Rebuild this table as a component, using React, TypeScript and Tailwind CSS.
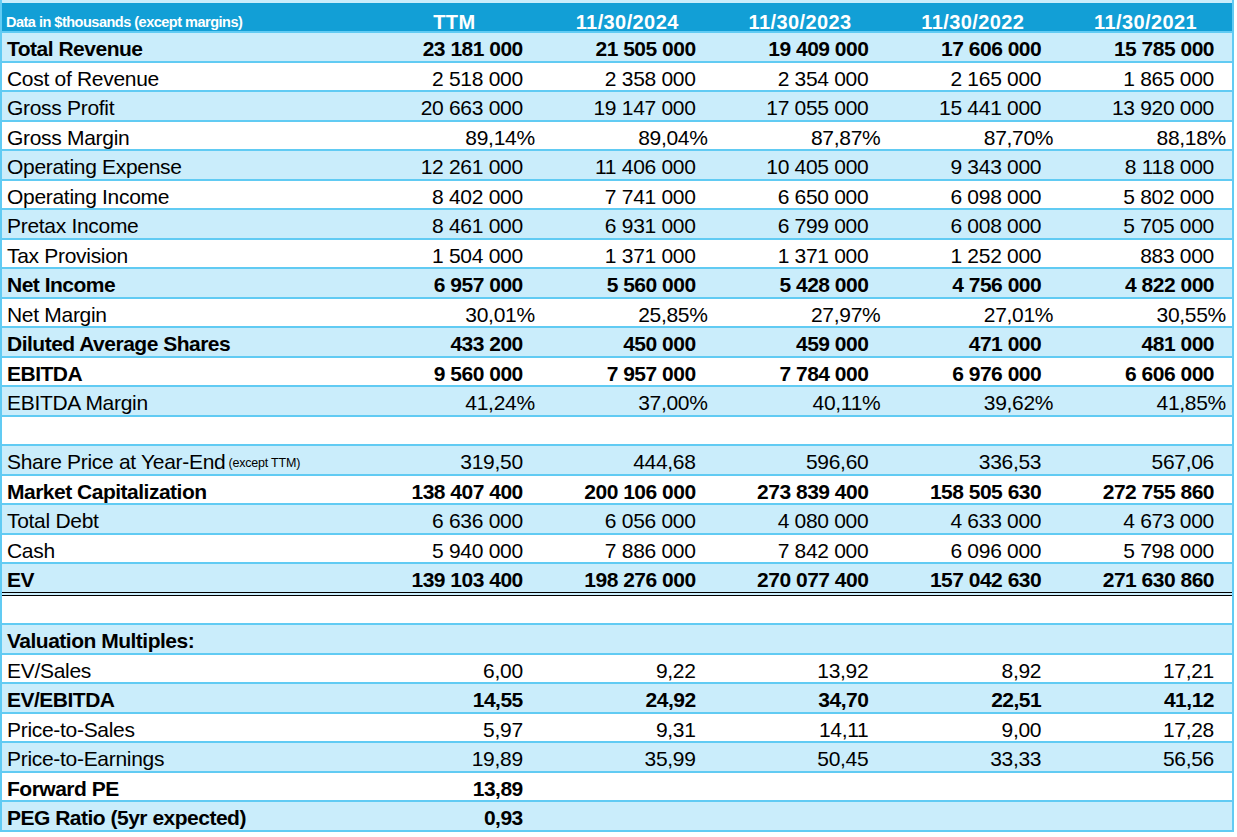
import React from 'react';

type Row = {
  label: string;
  note?: string;
  values?: string[];
  bold?: boolean;
  pct?: boolean;
  double?: boolean;
};

const columns = ['TTM', '11/30/2024', '11/30/2023', '11/30/2022', '11/30/2021'];

const rows: Row[] = [
  { label: 'Total Revenue', bold: true, values: ['23 181 000', '21 505 000', '19 409 000', '17 606 000', '15 785 000'] },
  { label: 'Cost of Revenue', values: ['2 518 000', '2 358 000', '2 354 000', '2 165 000', '1 865 000'] },
  { label: 'Gross Profit', values: ['20 663 000', '19 147 000', '17 055 000', '15 441 000', '13 920 000'] },
  { label: 'Gross Margin', pct: true, values: ['89,14%', '89,04%', '87,87%', '87,70%', '88,18%'] },
  { label: 'Operating Expense', values: ['12 261 000', '11 406 000', '10 405 000', '9 343 000', '8 118 000'] },
  { label: 'Operating Income', values: ['8 402 000', '7 741 000', '6 650 000', '6 098 000', '5 802 000'] },
  { label: 'Pretax Income', values: ['8 461 000', '6 931 000', '6 799 000', '6 008 000', '5 705 000'] },
  { label: 'Tax Provision', values: ['1 504 000', '1 371 000', '1 371 000', '1 252 000', '883 000'] },
  { label: 'Net Income', bold: true, values: ['6 957 000', '5 560 000', '5 428 000', '4 756 000', '4 822 000'] },
  { label: 'Net Margin', pct: true, values: ['30,01%', '25,85%', '27,97%', '27,01%', '30,55%'] },
  { label: 'Diluted Average Shares', bold: true, values: ['433 200', '450 000', '459 000', '471 000', '481 000'] },
  { label: 'EBITDA', bold: true, values: ['9 560 000', '7 957 000', '7 784 000', '6 976 000', '6 606 000'] },
  { label: 'EBITDA Margin', pct: true, values: ['41,24%', '37,00%', '40,11%', '39,62%', '41,85%'] },
  { label: '' },
  { label: 'Share Price at Year-End', note: '(except TTM)', values: ['319,50', '444,68', '596,60', '336,53', '567,06'] },
  { label: 'Market Capitalization', bold: true, values: ['138 407 400', '200 106 000', '273 839 400', '158 505 630', '272 755 860'] },
  { label: 'Total Debt', values: ['6 636 000', '6 056 000', '4 080 000', '4 633 000', '4 673 000'] },
  { label: 'Cash', values: ['5 940 000', '7 886 000', '7 842 000', '6 096 000', '5 798 000'] },
  { label: 'EV', bold: true, double: true, values: ['139 103 400', '198 276 000', '270 077 400', '157 042 630', '271 630 860'] },
  { label: '' },
  { label: 'Valuation Multiples:', bold: true },
  { label: 'EV/Sales', values: ['6,00', '9,22', '13,92', '8,92', '17,21'] },
  { label: 'EV/EBITDA', bold: true, values: ['14,55', '24,92', '34,70', '22,51', '41,12'] },
  { label: 'Price-to-Sales', values: ['5,97', '9,31', '14,11', '9,00', '17,28'] },
  { label: 'Price-to-Earnings', values: ['19,89', '35,99', '50,45', '33,33', '56,56'] },
  { label: 'Forward PE', bold: true, values: ['13,89'] },
  { label: 'PEG Ratio (5yr expected)', bold: true, values: ['0,93'] },
];

export default function App() {
  return (
    <div className="min-h-screen bg-white font-['Liberation_Sans',Arial,sans-serif] text-black">
      <div className="w-[1234px] border-x-2 border-[#61cbf3]">
        {/* partial row above header */}
        <div className="h-[3px] bg-[#caedfb]" />

        <div className="grid h-[30px] grid-cols-[366px_repeat(5,1fr)] border-b-2 border-[#61cbf3] bg-[#129fd6] text-white">
          <div className="flex items-center whitespace-nowrap pl-[4px] pt-[5px] text-[14.5px] font-bold tracking-[-0.5px]">
            Data in $thousands (except margins)
          </div>
          {columns.map((c) => (
            <div key={c} className="flex items-center justify-center pt-[4px] text-[20px] font-bold tracking-[0.4px]">
              {c}
            </div>
          ))}
        </div>

        {rows.map((r, i) => (
          <div
            key={i}
            className={`grid grid-cols-[366px_repeat(5,1fr)] ${i % 2 === 0 ? 'bg-[#caedfb]' : 'bg-white'} ${
              r.double ? 'h-[31.5px] border-b-4 border-double border-black' : 'h-[29.5px] border-b-2 border-[#61cbf3]'
            } ${r.bold ? 'font-bold tracking-[-0.5px]' : 'tracking-[-0.3px]'} text-[21px]`}
          >
            <div className="flex items-center whitespace-nowrap pl-[5px]">
              {r.label}
              {r.note && <span className="ml-[3px] mt-[3px] text-[12.5px] tracking-[-0.2px]">{r.note}</span>}
            </div>
            {columns.map((_, j) => (
              <div
                key={j}
                className={`flex items-center justify-end whitespace-nowrap ${r.pct ? 'pr-[6px]' : 'pr-[18px]'}`}
              >
                {r.values?.[j] ?? ''}
              </div>
            ))}
          </div>
        ))}
      </div>
    </div>
  );
}
